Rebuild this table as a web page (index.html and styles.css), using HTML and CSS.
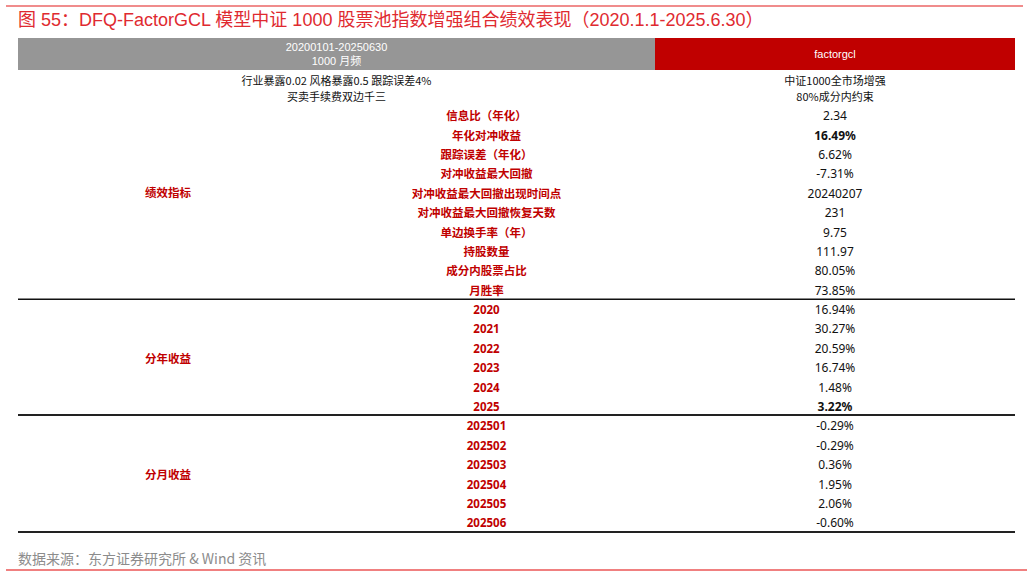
FILE: index.html
```html
<!DOCTYPE html>
<html lang="zh">
<head>
<meta charset="utf-8">
<link rel="stylesheet" href="styles.css">
</head>
<body>
<div class="page">
  <div class="rule-top"></div>
  <h1 class="title">图 55：DFQ-FactorGCL 模型中证 1000 股票池指数增强组合绩效表现（2020.1.1-2025.6.30）</h1>
  <table class="perf">
    <colgroup>
      <col class="c1"><col class="c2"><col class="c3">
    </colgroup>
    <thead>
      <tr class="head">
        <th colspan="2" class="h-gray">20200101-20250630<br>1000 月频</th>
        <th class="h-red">factorgcl</th>
      </tr>
      <tr class="sub">
        <td colspan="2">行业暴露0.02 风格暴露0.5 跟踪误差4%<br>买卖手续费双边千三</td>
        <td>中证1000全市场增强<br>80%成分内约束</td>
      </tr>
    </thead>
    <tbody class="grp">
      <tr><td rowspan="10" class="grp-label raised">绩效指标</td><td class="lab">信息比（年化）</td><td class="val">2.34</td></tr>
      <tr><td class="lab">年化对冲收益</td><td class="val b">16.49%</td></tr>
      <tr><td class="lab">跟踪误差（年化）</td><td class="val">6.62%</td></tr>
      <tr><td class="lab">对冲收益最大回撤</td><td class="val">-7.31%</td></tr>
      <tr><td class="lab">对冲收益最大回撤出现时间点</td><td class="val">20240207</td></tr>
      <tr><td class="lab">对冲收益最大回撤恢复天数</td><td class="val">231</td></tr>
      <tr><td class="lab">单边换手率（年）</td><td class="val">9.75</td></tr>
      <tr><td class="lab">持股数量</td><td class="val">111.97</td></tr>
      <tr><td class="lab">成分内股票占比</td><td class="val">80.05%</td></tr>
      <tr class="last"><td class="lab">月胜率</td><td class="val">73.85%</td></tr>
    </tbody>
    <tbody class="grp thick">
      <tr><td rowspan="6" class="grp-label">分年收益</td><td class="lab">2020</td><td class="val">16.94%</td></tr>
      <tr><td class="lab">2021</td><td class="val">30.27%</td></tr>
      <tr><td class="lab">2022</td><td class="val">20.59%</td></tr>
      <tr><td class="lab">2023</td><td class="val">16.74%</td></tr>
      <tr><td class="lab">2024</td><td class="val">1.48%</td></tr>
      <tr class="last"><td class="lab">2025</td><td class="val b">3.22%</td></tr>
    </tbody>
    <tbody class="grp thick">
      <tr><td rowspan="6" class="grp-label">分月收益</td><td class="lab">202501</td><td class="val">-0.29%</td></tr>
      <tr><td class="lab">202502</td><td class="val">-0.29%</td></tr>
      <tr><td class="lab">202503</td><td class="val">0.36%</td></tr>
      <tr><td class="lab">202504</td><td class="val">1.95%</td></tr>
      <tr><td class="lab">202505</td><td class="val">2.06%</td></tr>
      <tr class="last"><td class="lab">202506</td><td class="val">-0.60%</td></tr>
    </tbody>
  </table>
  <p class="source">数据来源：东方证券研究所 &amp; Wind 资讯</p>
  <div class="rule-bottom"></div>
</div>
</body>
</html>
```

FILE: styles.css
```css
html, body {
  margin: 0;
  padding: 0;
  background: #ffffff;
}

.page {
  width: 1032px;
  height: 577px;
  overflow: hidden;
  font-family: "Liberation Sans", "Noto Sans CJK SC", sans-serif;
}

.rule-top {
  margin: 5px 9px 0 6px;
  height: 2px;
  background: #f08c8c;
}

.title {
  margin: 0 0 5px 18px;
  height: 26px;
  line-height: 26px;
  font-size: 18px;
  font-weight: normal;
  color: #df2a30;
  white-space: nowrap;
}

.perf {
  margin-left: 18px;
  width: 997px;
  border-collapse: collapse;
  table-layout: fixed;
}

.c1 { width: 300px; }
.c2 { width: 337px; }
.c3 { width: 360px; }

.perf th,
.perf td {
  padding: 0;
  text-align: center;
  vertical-align: middle;
}

.head th {
  height: 32px;
  color: #ffffff;
  font-weight: normal;
  font-size: 11px;
  line-height: 14px;
}

.h-gray { background: #969696; }
.h-red { background: #c00000; }

.sub td {
  height: 36px;
  font-family: "Noto Sans CJK SC", sans-serif;
  font-size: 11px;
  line-height: 16px;
  color: #111111;
  padding-top: 0;
}

.grp tr td.lab,
.grp tr td.val {
  height: 19.4px;
  line-height: 19px;
}

.grp-label,
.lab {
  color: #c00000;
  font-weight: bold;
  font-size: 11.5px;
  font-family: "Noto Sans", "Noto Sans CJK SC", sans-serif;
}

.grp-label.raised {
  padding-bottom: 22px;
}

.val {
  font-family: "Noto Sans", "Noto Sans CJK SC", sans-serif;
  font-size: 12px;
  color: #111111;
}

.val.b { font-weight: bold; }

.grp .last td,
.grp .grp-label {
  box-shadow: inset 0 -1.5px 0 #111111;
}

.grp.thick .last td,
.grp.thick .grp-label {
  box-shadow: inset 0 -2px 0 #222222;
}

.source {
  margin: 16px 0 0 18px;
  height: 18px;
  line-height: 18px;
  font-size: 14px;
  font-family: "Noto Sans CJK SC", sans-serif;
  color: #8c8c8c;
  white-space: nowrap;
}

.rule-bottom {
  margin: 2px 5px 0 6px;
  height: 2px;
  background: #f08080;
}
```
